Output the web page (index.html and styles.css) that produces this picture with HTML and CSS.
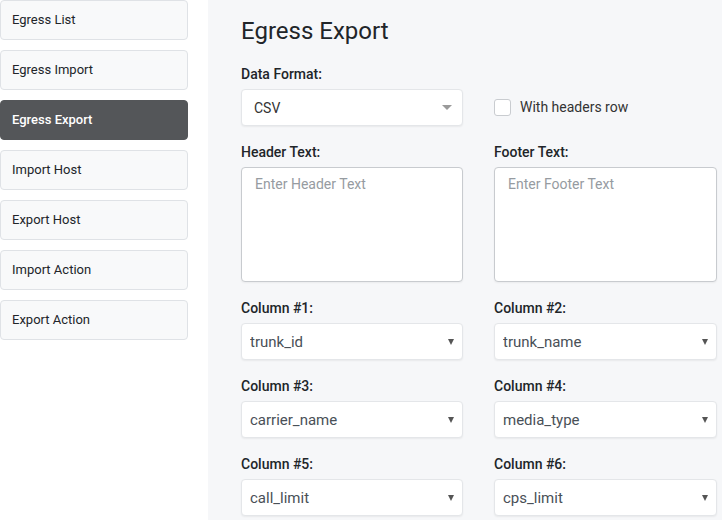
FILE: index.html
```html
<!doctype html>
<html>
<head>
    <meta charset="UTF-8">
    <title>Egress Export</title>
    <link rel="stylesheet" href="styles.css">
</head>
<body>
    <div class="page">
        <ul class="side-nav">
            <li><a href="#">Egress List</a></li>
            <li><a href="#">Egress Import</a></li>
            <li><a href="#" class="active">Egress Export</a></li>
            <li><a href="#">Import Host</a></li>
            <li><a href="#">Export Host</a></li>
            <li><a href="#">Import Action</a></li>
            <li><a href="#">Export Action</a></li>
        </ul>

        <div class="panel">
            <h1>Egress Export</h1>
            <form class="form">
                <div class="field">
                    <label>Data Format:</label>
                    <div class="select select-format">
                        <select><option>CSV</option></select>
                    </div>
                </div>
                <div class="field field-check">
                    <label class="check"><input type="checkbox"><span class="box"></span>With headers row</label>
                </div>

                <div class="field">
                    <label>Header Text:</label>
                    <textarea placeholder="Enter Header Text"></textarea>
                </div>
                <div class="field">
                    <label>Footer Text:</label>
                    <textarea placeholder="Enter Footer Text"></textarea>
                </div>

                <div class="field">
                    <label>Column #1:</label>
                    <div class="select"><select><option>trunk_id</option></select></div>
                </div>
                <div class="field">
                    <label>Column #2:</label>
                    <div class="select"><select><option>trunk_name</option></select></div>
                </div>

                <div class="field">
                    <label>Column #3:</label>
                    <div class="select"><select><option>carrier_name</option></select></div>
                </div>
                <div class="field">
                    <label>Column #4:</label>
                    <div class="select"><select><option>media_type</option></select></div>
                </div>

                <div class="field">
                    <label>Column #5:</label>
                    <div class="select"><select><option>call_limit</option></select></div>
                </div>
                <div class="field">
                    <label>Column #6:</label>
                    <div class="select"><select><option>cps_limit</option></select></div>
                </div>
            </form>
        </div>
    </div>
</body>
</html>
```

FILE: styles.css
```css
* { margin: 0; padding: 0; box-sizing: border-box; }
html, body { height: 100%; }
body { background: #fff; font-family: Roboto, "Liberation Sans", Arial, sans-serif; color: #212529; overflow: hidden; }

.page { display: flex; gap: 20px; height: 100%; }

.side-nav { list-style: none; width: 188px; flex: none; display: flex; flex-direction: column; gap: 10px; }
.side-nav a { display: block; height: 40px; line-height: 38px; padding-left: 11px; font-size: 13px; color: #212529; text-decoration: none; background: #f8f9fa; border: 1px solid #dfe2e6; border-radius: 4px; }
.side-nav a.active { background: #545659; border-color: #545659; color: #fff; font-weight: 500; }

.panel { flex: 1; background: #f6f7f9; padding: 17px 5px 0 33px; }
.panel h1 { font-size: 24px; font-weight: 400; line-height: 29px; color: #212529; margin-bottom: 18px; }

.form { display: grid; grid-template-columns: 222px 223px; column-gap: 31px; row-gap: 16px; }
.field { display: flex; flex-direction: column; }
.field > label { font-size: 14px; font-weight: 500; line-height: 21px; margin-bottom: 4px; color: #212529; }
.field-check { justify-content: flex-end; }

.field > .check { display: flex; align-items: center; height: 37px; margin-bottom: 0; font-size: 14px; font-weight: 400; color: #333; cursor: pointer; }
.check input { display: none; }
.check .box { width: 17px; height: 17px; margin-right: 9px; background: #fff; border: 1px solid #c9ccd0; border-radius: 3px; }

.select { position: relative; }
.select select { -webkit-appearance: none; appearance: none; width: 100%; height: 37px; padding: 0 24px 0 8px; font-family: inherit; font-size: 15px; color: #495057; background: #fff; border: 1px solid #e4e6e9; border-radius: 4px; box-shadow: 0 1px 2px rgba(0,0,0,0.06); outline: none; }
.select::after { content: ""; position: absolute; right: 9px; top: 16px; border-left: 3.5px solid transparent; border-right: 3.5px solid transparent; border-top: 6px solid #555; pointer-events: none; }

.select-format select { padding-left: 12px; font-size: 14px; color: #333; }
.select-format::after { right: 11px; top: 16px; border-left-width: 5px; border-right-width: 5px; border-top-width: 5px; border-top-color: #9a9a9a; }

textarea { height: 115px; resize: none; padding: 8px 13px; font-family: inherit; font-size: 14px; color: #495057; background: #fff; border: 1px solid #c8cbcf; border-radius: 4px; box-shadow: 0 1px 2px rgba(0,0,0,0.05); outline: none; }
textarea::placeholder { color: #969ba1; }
```
